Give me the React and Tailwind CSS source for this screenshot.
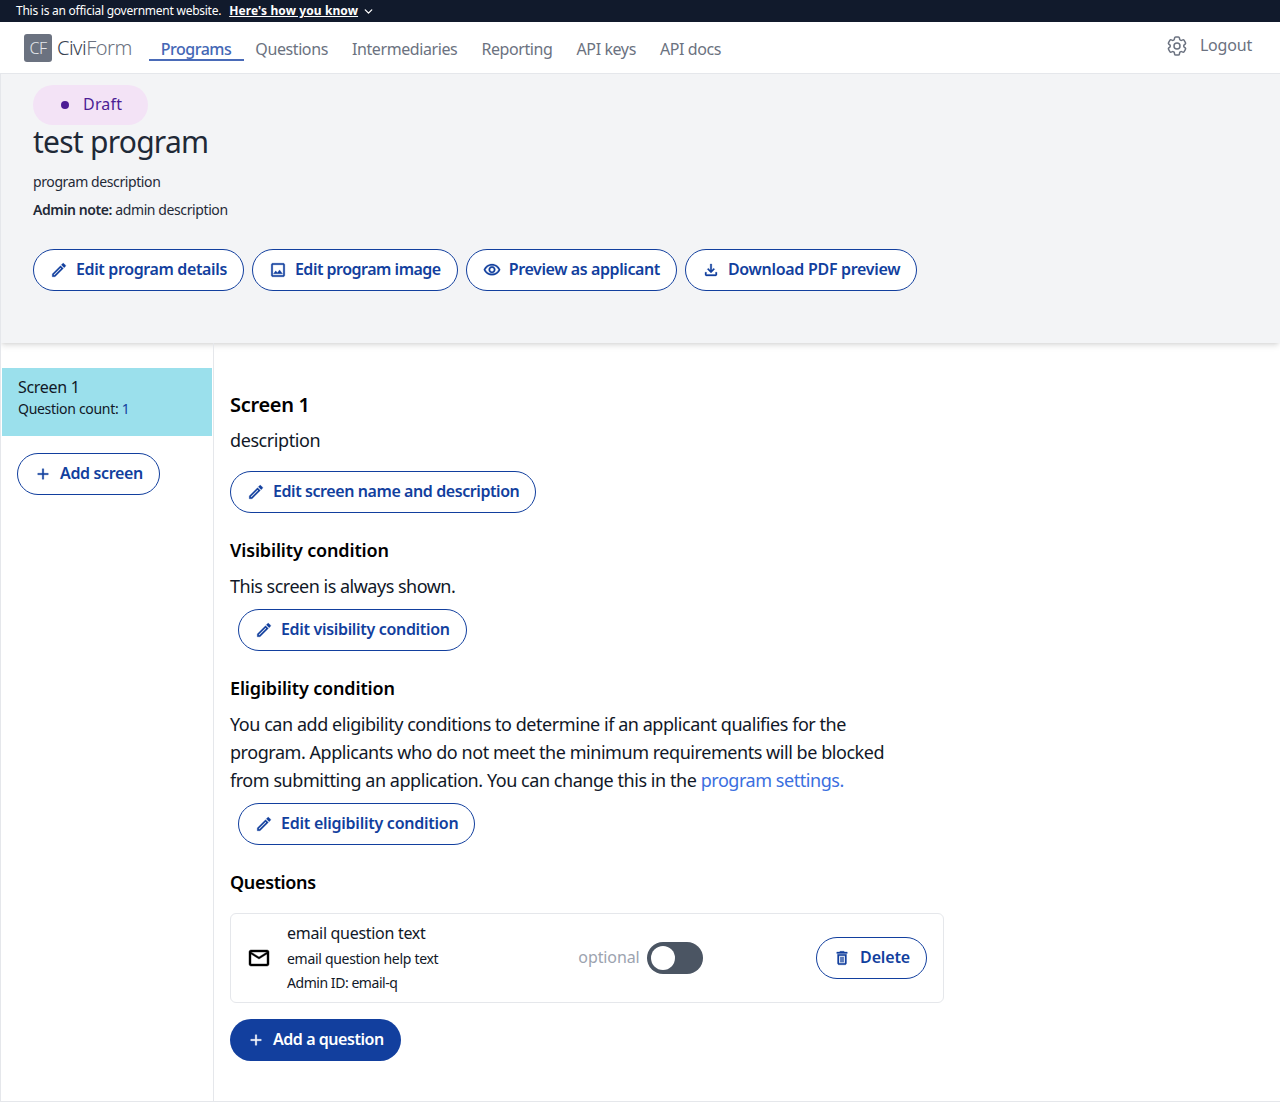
import { ChevronDown } from "lucide-react";
import { HiOutlineCog6Tooth } from "react-icons/hi2";

const font = "font-['Noto_Sans','Liberation_Sans',sans-serif]";

const MaterialIcon = ({ d, size = 18, className = "-mx-[1px]" }) => (
  <svg width={size} height={size} viewBox="0 0 24 24" fill="currentColor" stroke="currentColor" strokeWidth={0.4} className={`shrink-0 ${className}`}>
    <path d={d} />
  </svg>
);

const icons = {
  edit: "M14.06 9.02l.92.92L5.92 19H5v-.92l9.06-9.06M17.66 3c-.25 0-.51.1-.7.29l-1.83 1.83 3.75 3.75 1.83-1.83c.39-.39.39-1.02 0-1.41l-2.34-2.34c-.2-.2-.45-.29-.71-.29zm-3.6 3.19L3 17.25V21h3.75L17.81 9.94l-3.75-3.75z",
  image: "M19 5v14H5V5h14m0-2H5c-1.1 0-2 .9-2 2v14c0 1.1.9 2 2 2h14c1.1 0 2-.9 2-2V5c0-1.1-.9-2-2-2zm-4.86 8.86l-3 3.87L9 13.14 6 17h12l-3.86-5.14z",
  eye: "M12 6c3.79 0 7.17 2.13 8.82 5.5C19.17 14.87 15.79 17 12 17s-7.17-2.13-8.82-5.5C4.83 8.13 8.21 6 12 6m0-2C7 4 2.73 7.11 1 11.5 2.73 15.89 7 19 12 19s9.27-3.11 11-7.5C21.27 7.11 17 4 12 4zm0 5c1.38 0 2.5 1.12 2.5 2.5S13.38 14 12 14s-2.5-1.12-2.5-2.5S10.62 9 12 9m0-2c-2.48 0-4.5 2.02-4.5 4.5S9.52 16 12 16s4.5-2.02 4.5-4.5S14.48 7 12 7z",
  download: "M18 15v3H6v-3H4v3c0 1.1.9 2 2 2h12c1.1 0 2-.9 2-2v-3h-2zm-1-4l-1.41-1.41L13 12.17V4h-2v8.17L8.41 9.59 7 11l5 5 5-5z",
  trash: "M6 19c0 1.1.9 2 2 2h8c1.1 0 2-.9 2-2V7H6v12zM8 9h8v10H8V9zm7.5-5l-1-1h-5l-1 1H5v2h14V4zM10 10.5h1.4v7H10zM12.6 10.5H14v7h-1.4z",
  plus: "M19 13h-6v6h-2v-6H5v-2h6V5h2v6h6v2z",
  mail: "M20 4H4c-1.1 0-1.99.9-1.99 2L2 18c0 1.1.9 2 2 2h16c1.1 0 2-.9 2-2V6c0-1.1-.9-2-2-2zm0 14H4V8l8 5 8-5v10zm-8-7L4 6h16l-8 5z",
};

const OutlineButton = ({ icon, children, className = "" }) => (
  <button className={`flex h-[42px] items-center gap-[9px] rounded-full border border-[#123f9e] bg-white pl-[17px] pr-[16px] text-[16px] font-semibold text-[#123f9e] ${className}`}>
    <MaterialIcon d={icons[icon]} />
    <span className="pb-[2px]">{children}</span>
  </button>
);

const navItems = ["Questions", "Intermediaries", "Reporting", "API keys", "API docs"];

export default function App() {
  return (
    <div className={`${font} flex h-[1102px] w-[1280px] flex-col overflow-hidden bg-white text-black`}>
      <div className="flex h-[22px] items-center bg-[#111a2c] pl-[16px] text-[12px] tracking-[-0.25px] text-white">
        <span>This is an official government website.</span>
        <span className="ml-[8px] font-bold tracking-[0.1px] underline">Here's how you know</span>
        <ChevronDown size={13} strokeWidth={2.4} className="ml-[4px]" />
      </div>

      <nav className="z-10 flex h-[52px] items-center border-b border-[#e5e7eb] bg-white pl-[24px] pr-[28px]">
        <div className="flex h-[28px] w-[28px] items-center justify-center rounded-[3px] bg-[#6b7280] text-[16px] font-light tracking-[-0.5px] text-[#e5e7eb]">CF</div>
        <div className="ml-[5px] text-[20px] font-light tracking-[-0.5px] text-[#374151]">
          Civi<span className="text-[#6b7280]">Form</span>
        </div>
        <div className="ml-[17px] mt-[3px] flex items-center text-[16px] leading-[20px] tracking-[-0.4px] text-[#6b7280]">
          <a className="-mr-[1px] border-b-2 border-[#4a6bb8] pl-[12px] pr-[13px] pt-[2px] font-medium tracking-[-0.5px] text-[#4467b5]">Programs</a>
          {navItems.map((item) => (
            <a key={item} className="px-[12px] pt-[2px] pb-[2px]">{item}</a>
          ))}
        </div>
        <div className="ml-auto mb-[5px] flex items-center gap-[11px] text-[16px] tracking-[-0.2px] text-[#6b7280]">
          <HiOutlineCog6Tooth size={24} className="mt-[2px]" />
          <span>Logout</span>
        </div>
      </nav>

      <header className="h-[269px] shrink-0 border-l border-[#e5e7eb] bg-[#f3f4f6] pl-[32px] pt-[11px] shadow-md">
        <div className="flex h-[40px] w-[115px] items-center rounded-[20px] bg-[#f3e3f6] pl-[28px] text-[16px] tracking-[0.2px] text-[#4c1d95]">
          <span className="h-[8px] w-[8px] rounded-full bg-[#4c1d95]" />
          <span className="mb-[2px] ml-[14px]">Draft</span>
        </div>
        <h1 className="-mt-[1px] text-[30px] leading-[36px] tracking-[-0.75px] text-[#1f2937]">test program</h1>
        <p className="mt-[12px] text-[14px] leading-[20px] tracking-[-0.4px] text-[#1f2937]">program description</p>
        <p className="mt-[8px] text-[14px] leading-[20px] tracking-[-0.4px] text-[#1f2937]">
          <span className="font-semibold">Admin note:</span> admin description
        </p>
        <div className="mt-[29px] flex gap-[8px]">
          <OutlineButton icon="edit" className="tracking-[-0.37px]">Edit program details</OutlineButton>
          <OutlineButton icon="image" className="tracking-[-0.5px]">Edit program image</OutlineButton>
          <OutlineButton icon="eye" className="tracking-[-0.4px]">Preview as applicant</OutlineButton>
          <OutlineButton icon="download" className="tracking-[-0.3px]">Download PDF preview</OutlineButton>
        </div>
      </header>

      <div className="flex flex-1">
        <aside className="w-[214px] shrink-0 border-x border-[#e5e7eb] pt-[25px]">
          <div className="ml-[1px] h-[68px] w-[210px] bg-[#9be0ec] pl-[16px] pt-[7px] text-[#111827]">
            <div className="text-[16px] leading-[24px] tracking-[-0.3px]">Screen 1</div>
            <div className="text-[14px] leading-[20px] tracking-[-0.3px]">Question count: <span className="text-[#123f9e]">1</span></div>
          </div>
          <OutlineButton icon="plus" className="ml-[16px] mt-[17px] tracking-[-0.35px]">Add screen</OutlineButton>
        </aside>

        <main className="flex-1 pl-[16px] pt-[48px]">
          <h2 className="text-[20px] font-semibold leading-[28px] tracking-[-0.3px]">Screen 1</h2>
          <p className="mt-[7px] text-[18px] leading-[28px] tracking-[-0.42px] text-[#111827]">description</p>
          <OutlineButton icon="edit" className="mt-[17px] tracking-[-0.42px]">Edit screen name and description</OutlineButton>

          <h3 className="mt-[23px] text-[18px] font-semibold leading-[28px] tracking-[-0.15px]">Visibility condition</h3>
          <p className="mt-[8px] text-[18px] leading-[28px] tracking-[-0.5px] text-[#111827]">This screen is always shown.</p>
          <OutlineButton icon="edit" className="ml-[8px] mt-[9px] tracking-[-0.32px]">Edit visibility condition</OutlineButton>

          <h3 className="mt-[23px] text-[18px] font-semibold leading-[28px] tracking-[-0.15px]">Eligibility condition</h3>
          <p className="mt-[8px] w-[690px] text-[18px] leading-[28px] tracking-[-0.45px] text-[#111827]">
            You can add eligibility conditions to determine if an applicant qualifies for the program. Applicants who do not meet the minimum requirements will be blocked from submitting an application. You can change this in the <a className="text-[#3b6fe0]">program settings.</a>
          </p>
          <OutlineButton icon="edit" className="ml-[8px] mt-[9px] tracking-[-0.25px]">Edit eligibility condition</OutlineButton>

          <h3 className="mt-[23px] text-[18px] font-semibold leading-[28px] tracking-[-0.35px]">Questions</h3>
          <div className="mt-[17px] flex h-[90px] w-[714px] items-center rounded-[6px] border border-[#e5e7eb] pl-[16px] pr-[16px]">
            <MaterialIcon d={icons.mail} size={24} className="" />
            <div className="ml-[16px] text-[14px] tracking-[-0.3px] text-[#111827]">
              <div className="-mt-[1px] text-[16px] leading-[24px]">email question text</div>
              <div className="mt-[2px] leading-[24px]">email question help text</div>
              <div className="leading-[24px] tracking-[-0.45px]">Admin ID: email-q</div>
            </div>
            <span className="mb-[2px] ml-[140px] text-[16px] tracking-[-0.1px] text-[#9ca3af]">optional</span>
            <div className="ml-[7px] flex h-[32px] w-[56px] items-center rounded-full bg-[#4b5563] pl-[4px]">
              <div className="h-[24px] w-[24px] rounded-full bg-white" />
            </div>
            <OutlineButton icon="trash" className="ml-auto gap-[10px] tracking-[-0.15px]">Delete</OutlineButton>
          </div>
          <button className="mt-[16px] flex h-[42px] items-center gap-[9px] rounded-full bg-[#123f9e] pl-[18px] pr-[17px] text-[16px] font-semibold tracking-[-0.45px] text-white">
            <MaterialIcon d={icons.plus} />
            <span className="pb-[2px]">Add a question</span>
          </button>
        </main>
      </div>
      <div className="h-[1px] bg-[#e5e7eb]" />
    </div>
  );
}
